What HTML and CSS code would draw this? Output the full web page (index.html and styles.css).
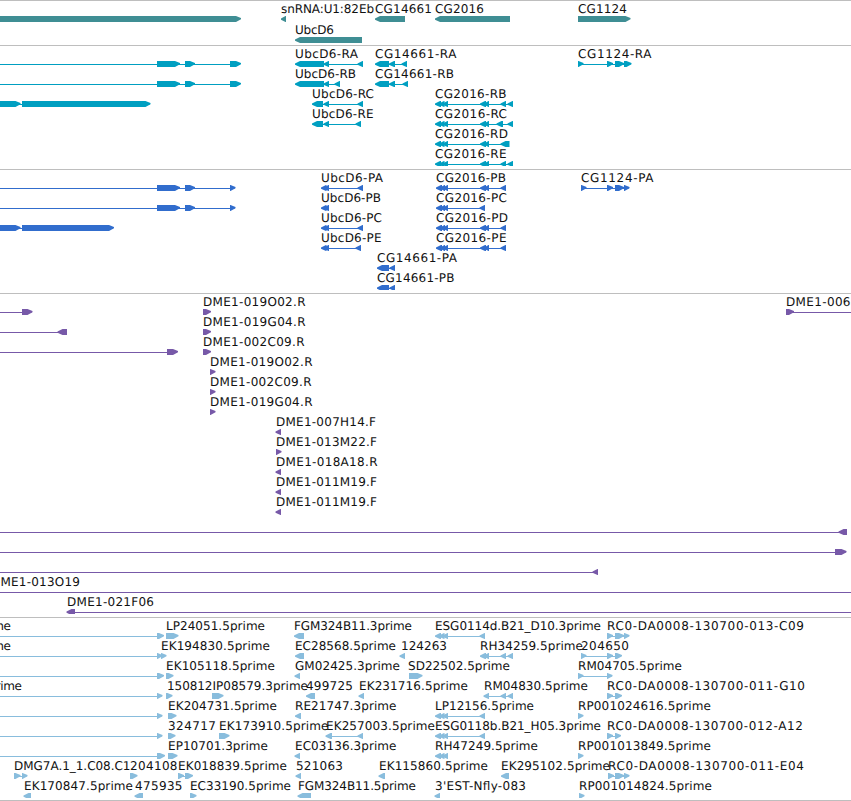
FILE: index.html
```html
<!DOCTYPE html>
<html lang="en">
<head>
	<meta charset="UTF-8">
	<title>Genome tracks</title>
	<link rel="stylesheet" href="styles.css">
</head>
<body>
	<div class="browser">
		<section class="track gene"></section>
		<section class="track transcript"></section>
		<section class="track protein"></section>
		<section class="track bac"></section>
		<section class="track est"></section>
	</div>
	<script src="tracks.js"></script>
</body>
</html>
```

FILE: styles.css
```css
body{
	margin:0;
	background:#fff;
}
.browser{
	width:851px;
	overflow:hidden;
	border-bottom:1px solid #bebebe;
}
.track{
	border-top:1px solid #bebebe;
	padding-bottom:3px;
}
.track svg{
	display:block;
}
.track text{
	font-family:"DejaVu Sans", sans-serif;
	font-size:12px;
	fill:#111;
	text-rendering:geometricPrecision;
}
.gene{
	fill:#3f8e94;
	padding-bottom:2px;
}
.transcript{
	fill:#009fc1;
}
.protein{
	fill:#316dcd;
}
.bac{
	fill:#7759a8;
}
.est{
	fill:#89bddd;
	padding-bottom:2px;
}
```

FILE: tracks.js
```js
// feature: [label, label start, label end, strand, [block start, block end, ...]]
// blocks at L or R run off the visible region
var L = [-30, -20];
var R = [870, 880];

var forkA = L.concat([157,180, 185,195, 230,241]);
var forkP = L.concat([157,180, 185,195, 230,235.5]);
var rExons = [435,441, 439,444.5, 442.5,448, 480,486, 484,489];
var pExons = [436,442, 440,445, 443,448, 480,486, 484,489, 500.5,506];
var eExons = [435,441, 439,444.5, 442.5,448, 479.5,485];

var tracks = {
	gene: [
		[['',0,0,'>',[-30,241]],
		 ['snRNA:U1:82Eb',281.5,373.5,'<',[281,286]],
		 ['CG14661',375.5,431.5,'<',[375,405]],
		 ['CG2016',435.5,483.5,'<',[435,510]],
		 ['CG1124',578.5,626.5,'>',[578,630.5]]],
		[['UbcD6',295.5,333.5,'<',[295,362]]]
	],
	transcript: [
		[['',0,0,'>',forkA],
		 ['UbcD6-RA',295.5,357.5,'<',[295,324, 323.5,329, 357.5,363]],
		 ['CG14661-RA',375.5,456,'<',[375,389, 389,395, 401.5,407]],
		 ['CG1124-RA',578.5,651,'>',[578,583.5, 607,613, 615,624, 624,631.5]]],
		[['',0,0,'>',forkA],
		 ['UbcD6-RB',295.5,355.5,'<',[295,324, 323.5,329, 334.5,340]],
		 ['CG14661-RB',375.5,453.5,'<',[375,389, 389,395, 402.5,408]]],
		[['',0,0,'>',[-30,20.5, 22,150.5]],
		 ['UbcD6-RC',312.5,373.5,'<',[312,323, 323.5,329, 357.5,363]],
		 ['CG2016-RB',435.5,506,'<',rExons.concat([500.5,506, 507.5,513])]],
		[['UbcD6-RE',312.5,373,'<',[312,323, 323.5,329, 355.5,361]],
		 ['CG2016-RC',435.5,506.5,'<',rExons.concat([496.5,503, 507.5,513])]],
		[['CG2016-RD',435.5,507.5,'<',rExons.concat([500.5,509.5])]],
		[['CG2016-RE',435.5,506,'<',rExons.concat([500.5,506, 507.5,513])]]
	],
	protein: [
		[['',0,0,'>',forkP],
		 ['UbcD6-PA',321.5,382.5,'<',[321,326.5, 323.5,329, 357.5,363]],
		 ['CG2016-PB',436.5,505.5,'<',pExons],
		 ['CG1124-PA',581.5,653,'>',[581,586.5, 607,613, 615,624, 624,629.5]]],
		[['',0,0,'>',forkP],
		 ['UbcD6-PB',321.5,380.5,'<',[321,326.5, 323.5,329]],
		 ['CG2016-PC',436.5,506.5,'<',[436,442, 440,445, 443,448, 479.5,485]]],
		[['',0,0,'>',[-30,20.5, 22,114]],
		 ['UbcD6-PC',321.5,381.5,'<',[321,326.5, 323.5,329, 357.5,363]],
		 ['CG2016-PD',436.5,507.5,'<',pExons]],
		[['UbcD6-PE',321.5,381,'<',[321,326.5, 323.5,329, 355.5,361]],
		 ['CG2016-PE',436.5,506,'<',pExons]],
		[['CG14661-PA',377.5,456.5,'<',[377,389, 389.5,395]]],
		[['CG14661-PB',377.5,454,'<',[377,389, 389.5,395]]]
	],
	bac: [
		[['',0,0,'>',L.concat([22,32.5])],
		 ['DME1-019O02.R',203.5,305,'>',[203,211]],
		 ['DME1-006',786.5,850,'>',[786,794].concat(R)]],
		[['',0,0,'<',L.concat([57.5,67])],
		 ['DME1-019G04.R',203.5,305,'>',[203,211]]],
		[['',0,0,'>',L.concat([167,178])],
		 ['DME1-002C09.R',203.5,304,'>',[203,211]]],
		[['DME1-019O02.R',210.5,312,'>',[210,215.5]]],
		[['DME1-002C09.R',210.5,311,'>',[210,215.5]]],
		[['DME1-019G04.R',210.5,312,'>',[210,215.5]]],
		[['DME1-007H14.F',276.5,375.5,'<',[275.5,281]]],
		[['DME1-013M22.F',276.5,376.5,'>',[276,281.5]]],
		[['DME1-018A18.R',276.5,377,'<',[275.5,281]]],
		[['DME1-011M19.F',276.5,376.5,'<',[275.5,281]]],
		[['DME1-011M19.F',276.5,376.5,'<',[275.5,281]]],
		[['',0,0,'<',L.concat([838.5,847])]],
		[['',0,0,'>',L.concat([835,846.5])]],
		[['',0,0,'<',L.concat([592.5,598])]],
		[['DME1-013O19',-8.5,79.5,'<',L.concat(R)]],
		[['DME1-021F06',67.5,153.5,'<',[66.5,75].concat(R)]]
	],
	est: [
		[['5prime',-29.5,10.5,'>',L.concat([157,164])],
		 ['LP24051.5prime',166.5,264.5,'>',[166,178.5]],
		 ['FGM324B11.3prime',294.5,411.5,'<',[294,304]],
		 ['ESG0114d.B21_D10.3prime',435.5,600.5,'<',eExons],
		 ['RC0-DA0008-130700-013-C09',607.5,803.5,'>',[607,613, 615,624, 624,629.5]]],
		[['5prime',-29.5,10.5,'>',L.concat([157,162.5])],
		 ['EK194830.5prime',161.5,269.5,'>',[161,166.5]],
		 ['EC28568.5prime',295.5,395.5,'<',[295,304]],
		 ['124263',401.5,446.5,'<',[399.5,405]],
		 ['RH34259.5prime',480.5,582.5,'<',[480,486, 483.5,489, 500.5,506, 507.5,513]],
		 ['204650',581.5,628.5,'>',[581,586.5, 607,613, 615,622]]],
		[['',0,0,'>',L.concat([157,164])],
		 ['EK105118.5prime',166.5,274.5,'>',[166,173.5]],
		 ['GM02425.3prime',295.5,399.5,'<',[294.5,300]],
		 ['SD22502.5prime',408.5,509.5,'>',[409,422.5]],
		 ['RM04705.5prime',578.5,681.5,'>',[578,583.5, 607,612.5]]],
		[['5prime',-18.5,21.5,'>',L.concat([157,162.5])],
		 ['150812',167.5,212,'>',[166,172.5]],
		 ['IP08579.3prime',213,307.5,'>',[212,223.5]],
		 ['499725',306.5,352.5,'<',[306,315]],
		 ['EK231716.5prime',359.5,467.5,'<',[358.5,364]],
		 ['RM04830.5prime',484.5,587.5,'<',[483.5,489, 500.5,506, 507.5,513]],
		 ['RC0-DA0008-130700-011-G10',607.5,804.5,'>',[607,613, 615,622]]],
		[['',0,0,'>',L.concat([157,162.5])],
		 ['EK204731.5prime',168.5,276.5,'>',[168,176.5]],
		 ['RE21747.3prime',295.5,396,'<',[295,301]],
		 ['LP12156.5prime',435.5,533.5,'<',eExons],
		 ['RP001024616.5prime',578.5,710.5,'>',[578,583.5]]],
		[['',0,0,'>',L.concat([157,162.5])],
		 ['324717',168.5,215.5,'>',[168,175.5]],
		 ['EK173910.5prime',219.5,328,'>',[219,229.5]],
		 ['EK257003.5prime',326.5,434.5,'<',[325.5,332, 357.5,363]],
		 ['ESG0118b.B21_H05.3prime',435.5,600.5,'<',eExons],
		 ['RC0-DA0008-130700-012-A12',607.5,802.5,'>',[607,613, 615,621]]],
		[['',0,0,'>',L.concat([157,165])],
		 ['EP10701.3prime',168.5,267.5,'>',[168,177.5]],
		 ['EC03136.3prime',295.5,396,'<',[294.5,300]],
		 ['RH47249.5prime',435.5,537.5,'<',[435,441, 439,444.5, 442.5,448]],
		 ['RP001013849.5prime',578.5,710.5,'>',[578,583.5]]],
		[['DMG7A.1_1.C08.C1',14.5,130,'>',[14,20.5, 22,27.5]],
		 ['204108',130.5,177,'>',[130,137.5]],
		 ['EK018839.5prime',178.5,286.5,'>',[178,184, 185,193]],
		 ['521063',296.5,342.5,'<',[295.5,301]],
		 ['EK115860.5prime',379.5,487.5,'<',[378.5,385]],
		 ['EK295102.5prime',501.5,609.5,'<',[501,509]],
		 ['RC0-DA0008-130700-011-E04',608.5,803.5,'>',[608,614, 615,624, 624,629.5]]],
		[['EK170847.5prime',24.5,132.5,'<',[23.5,31]],
		 ['475935',135.5,182,'<',[134.5,143]],
		 ['EC33190.5prime',190.5,290.5,'>',[190,196.5]],
		 ['FGM324B11.5prime',298.5,415.5,'<',[297.5,311]],
		 ["3'EST-Nfly-083",435.5,525.5,'<',[434.5,440]],
		 ['RP001014824.5prime',579.5,711.5,'>',[579,584.5]]]
	]
};

// block with an arrow tip on the strand side
function block(x1, x2, y, strand){
	var tip = Math.min(5, x2 - x1 - 0.5);
	if (strand == '>') {
		return 'M' + x1 + ' ' + y + 'H' + (x2 - tip) + 'L' + x2 + ' ' + (y + 2) + 'V' + (y + 3.2) + 'L' + (x2 - tip) + ' ' + (y + 6) + 'H' + x1 + 'Z';
	}
	return 'M' + x2 + ' ' + y + 'V' + (y + 6) + 'H' + (x1 + tip) + 'L' + x1 + ' ' + (y + 3.8) + 'V' + (y + 2.6) + 'L' + (x1 + tip) + ' ' + y + 'Z';
}

function feature(f, top){
	var b = f[4];
	var y = top + 15;
	var html = '';
	if (b.length > 2) {
		html += '<rect x="' + (b[0] + 1) + '" y="' + (y + 3) + '" width="' + (b[b.length - 1] - b[0] - 2) + '" height="1"/>';
	}
	// one path for each block, so that overlapping tips stay filled
	for (var i = 0; i < b.length; i += 2) {
		html += '<path d="' + block(b[i], b[i + 1], y, f[3]) + '"/>';
	}
	if (f[0]) {
		html += '<text x="' + (f[1] - 0.5) + '" y="' + (top + 12) + '" textLength="' + (f[2] - f[1] + 1) + '">' + f[0] + '</text>';
	}
	return html;
}

for (var name in tracks) {
	var rows = tracks[name];
	var pitch = name == 'gene' ? 21 : 20;
	var html = '';
	for (var i = 0; i < rows.length; i++) {
		for (var j = 0; j < rows[i].length; j++) {
			html += feature(rows[i][j], i * pitch);
		}
	}
	document.querySelector('.' + name).innerHTML = '<svg width="851" height="' + rows.length * pitch + '">' + html + '</svg>';
}
```
